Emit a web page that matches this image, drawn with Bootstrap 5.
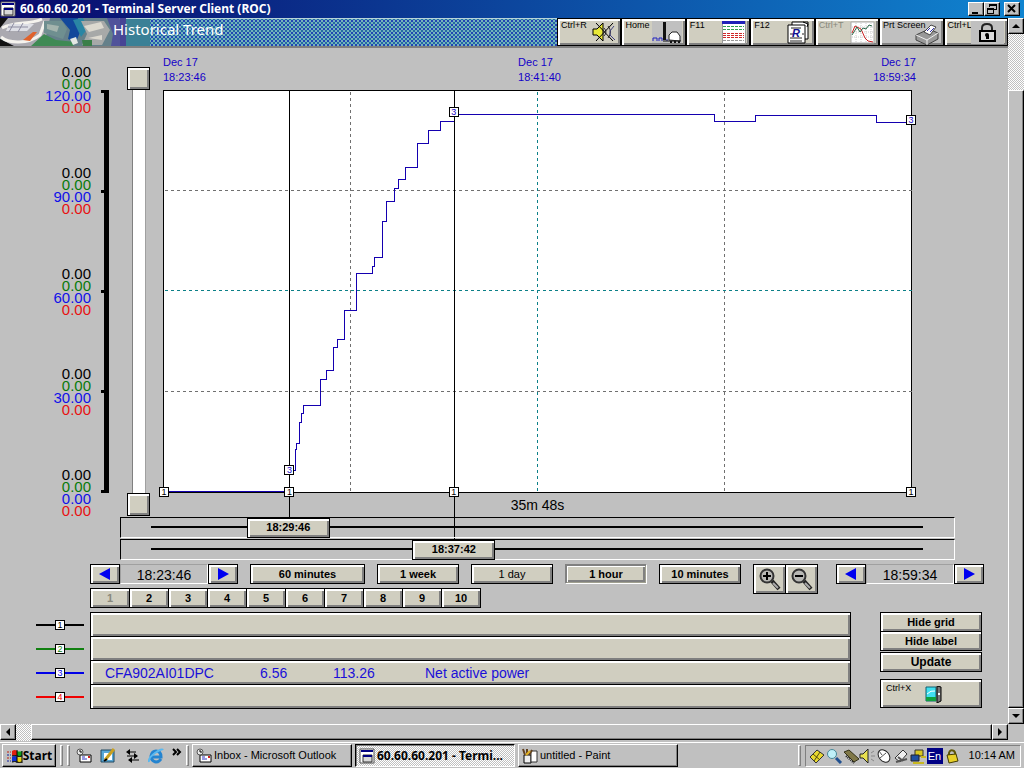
<!DOCTYPE html>
<html lang="en">
<head>
<meta charset="utf-8">
<meta name="viewport" content="width=device-width, initial-scale=1">
<title>60.60.60.201 - Terminal Server Client (ROC)</title>
<link href="https://cdn.jsdelivr.net/npm/bootstrap@5.3.0/dist/css/bootstrap.min.css" rel="stylesheet">
<style>
:root{--face:#c0c0c0;--key:#d0cec0;--ink:#1400c8;--dither:repeating-conic-gradient(#fff 0 25%,#c0c0c0 0 50%) 0 0/2px 2px}
body{font-family:"Liberation Sans",Arial,sans-serif;font-size:11px;line-height:1;color:#000;background:var(--face);min-width:980px}
button{color:#000;padding:0;border-radius:0;font:inherit;line-height:1}
svg{display:block;flex:none}
.btn{--bs-btn-padding-x:0;--bs-btn-padding-y:0;--bs-btn-border-radius:0;--bs-btn-color:#000;--bs-btn-font-size:11px;--bs-btn-line-height:1;--bs-btn-border-width:0;font-size:11px;line-height:1}
/* raised window-manager surfaces */
.raised,.raised.btn{background:var(--face);border:1px solid;border-color:#fff #000 #000 #fff;box-shadow:inset -1px -1px #808080}
.titlebar{height:18px;background:linear-gradient(90deg,#08086b,#1084d0);color:#fff;font:bold 12px/18px "Noto Sans","Liberation Sans",sans-serif}
.capbtn{width:16px;height:14px}
/* beige keys */
.key,.key.btn{background:var(--key);border:1px solid #000;border-radius:0;color:#000;box-shadow:inset 1px 1px #fff,inset 2px 2px #fff,inset -1px -1px #808080,inset -2px -2px #808080;font-weight:bold;display:flex;align-items:center;justify-content:center}
.key:hover,.key:active{background:var(--key);color:#000}
.key.held{border-color:#808080 #fff #fff #808080;box-shadow:inset 1px 1px #808080,inset -1px -1px #a0a090,inset 2px 2px #fff,inset -3px -3px #808080}
.key.plain{font-weight:normal;font-size:11px}
.key:disabled{color:#88887c;opacity:1}
.app-head{height:30px;border-bottom:2px solid #808080}
.photo{width:126px}
.photo svg{width:100%;height:100%}
.mesh{border-top:1px solid #b8d4d8;background:radial-gradient(circle,#2244b4 0 1px,transparent 1px) 0 0/4px 4px,radial-gradient(circle,#2468a4 0 1px,transparent 1px) 2px 2px/4px 4px,#74b4bc}
.teal{width:24px;background:#3a8096;border-top:1px solid #b8d4d8}
.app-title{font:15px/22px "Noto Sans","Liberation Sans",sans-serif;color:#fff;left:113px;top:0}
.shortcuts{width:451px}
.shortcut,.shortcut.btn{flex:1 1 0;height:28px;font-size:9px;font-weight:normal;align-items:flex-start;justify-content:flex-start;padding:2px 0 0 3px;position:relative;white-space:nowrap}
.shortcut svg{position:absolute;right:2px;top:1px}
.shortcut.flatkey{background:#c0c0c0}
/* chart */
.chart{display:grid;grid-template-columns:91px 10px 8px 18px 23px 13px minmax(300px,1fr) 96px;grid-template-rows:42px minmax(240px,1fr) 24px}
.dates{grid-area:1/7;color:var(--ink);line-height:15px;padding-top:7px;margin-right:-4px}
.scale-col{grid-area:2/1;margin:-24px 0;font-size:15px;line-height:12px;text-align:right}
.scale-col .s2{color:#087a08}.scale-col .s3{color:#1010e8}.scale-col .s4{color:#e81010}
.axis{grid-area:2/3;border-right:5px solid #000}
.axis i{height:3px;background:#000}
.vslide{grid-area:2/5;margin:-23px 0 -23px}
.vslide input{appearance:none;-webkit-appearance:none;writing-mode:vertical-lr;width:23px;min-height:0;flex:1 1 0;margin:0;background:linear-gradient(90deg,#808080 0 1px,#fff 1px 13px,#a0a0a0 13px) 50% 0/14px 100% no-repeat}
.vslide input::-webkit-slider-thumb{-webkit-appearance:none;width:23px;height:23px;background:var(--key);border:1px solid #000;box-shadow:inset 2px 2px #fff,inset -2px -2px #808080}
.plot{grid-area:2/7;background:#fff;border:1px solid #000;position:relative}
.plot svg{position:absolute;inset:0;width:100%;height:100%;overflow:visible}
.cursor-line{position:absolute;top:0;width:1px;background:#000}
.cursor-line.c1{height:calc(100% + 25px)}.cursor-line.c2{height:calc(100% + 47px)}
.tag{width:10px;height:10px;background:#fff;border:1px solid #000;font-size:9px;line-height:9px;text-align:center;color:#000}
.tag.blue{color:var(--ink)}
.plot .tag{position:absolute;margin:-5px 0 0 -5px}
.duration{grid-area:3/7;font-size:14px;line-height:24px}
.tracks{margin:0 53px 0 120px}
.lane{position:relative;height:21px;border:1px solid #000;border-color:#000 #fff #fff #000;margin-bottom:1px}
.lane input{-webkit-appearance:none;appearance:none;display:block;width:calc(100% - 1px);height:20px;margin:0;background:linear-gradient(#000,#000) 50% 8px/calc(100% - 60px) 2px no-repeat}
.lane input::-webkit-slider-thumb{-webkit-appearance:none;width:83px;height:20px;background:var(--key);border:1px solid #000;box-shadow:inset 2px 2px #fff,inset -2px -2px #808080}
.lane output{position:absolute;top:0;width:83px;font-weight:bold;line-height:19px;text-align:center;pointer-events:none}
/* controls */
.controls{padding:3px 24px 0 90px;gap:12px}
.k-arrow{width:30px;height:20px}.k-arrow svg{margin:auto}
.clock{width:88px;height:20px;border:1px solid;border-color:#a0a0a0 #fff #fff #a0a0a0;font-size:14px;line-height:20px;text-align:center}
.k-span{width:82px;height:20px}.k-wide{width:115px}
.zooms{margin-bottom:-20px}.zooms .key{width:33px;height:30px}.zooms .key+.key{margin-left:-1px}
.pages{padding:4px 0 0 90px}
.pages .key{width:40px;height:20px;margin-right:-1px}
.lower{padding:4px 26px 16px 36px;gap:29px}
.pen{width:48px;height:2px;margin-right:6px;background:currentColor}
.pen .tag{margin:-4px auto 0;color:inherit}
.pen-row{margin-bottom:-1px}
.pen-row .key{height:25px;color:#1a10d8;font-size:14px;font-weight:normal;justify-content:flex-start;text-align:left;padding-left:14px}
.f-tag{width:155px}.f-min{width:73px}.f-max{width:92px}
.side{width:102px}
.side .key{height:20px}
.side .key+.key{margin-top:-1px}
.side .key.big{font-size:12px;margin-top:1px}
.side .key.exit{height:29px;font-size:9px;font-weight:normal;align-items:flex-start;justify-content:flex-start;padding:4px 0 0 5px;position:relative;margin-top:7px}
.exit svg{position:absolute;left:44px;top:6px}
/* scroll bars */
.vbar{width:16px}.vbar .raised,.hbar .raised{width:16px;height:16px;display:flex;align-items:center;justify-content:center}
.gutter{background:var(--dither)}
.vbar .gutter{height:56px}
.vbar .grip{height:auto;width:16px}
.hbar{height:17px;padding-right:16px}
.hbar .gutter{width:15px}.hbar .grip{width:auto}
/* taskbar */
.taskbar{height:26px;border-top:1px solid #fff;padding:0 3px 0 2px;margin-top:1px}
.taskbar .btn{height:23px}
.start{width:54px;font:bold 12px/1 "Noto Sans","Liberation Sans",sans-serif}
.ridge{width:3px;height:21px;border:1px solid;border-color:#fff #808080 #808080 #fff}
.quick{width:108px;padding-left:2px}
.tasks{margin-left:3px;gap:3px}
.task{width:160px;padding-left:3px;gap:2px;justify-content:flex-start;white-space:nowrap}
.task.on,.task.on.btn{background:var(--dither);border-color:#000 #fff #fff #000;box-shadow:inset 1px 1px #808080;font:bold 12px/1 "Noto Sans","Liberation Sans",sans-serif}
.tray{height:22px;border:1px solid;border-color:#808080 #fff #fff #808080;padding:0 5px 0 3px}
.lang{background:#000084;color:#fff;width:16px;height:16px;font-size:11px;line-height:16px;text-align:center}
</style>
</head>
<body>
<svg width="0" height="0" class="position-absolute" aria-hidden="true">
 <defs>
  <symbol id="win" viewBox="0 0 16 16"><path d="M1 1h14v14H1z" fill="#fff" stroke="#555"/><path d="M2 2h12v2H2z" fill="#000080"/><path d="M4 7h9v7H4z" fill="#d8d8d8" stroke="#333"/><path d="M4 7h9v2H4z" fill="#000080"/></symbol>
  <symbol id="mail" viewBox="0 0 16 16"><path d="M4 7h11v7H4z" fill="#fff" stroke="#000"/><path d="M6 11h5M6 9h3" stroke="#3030c0"/><path d="M12 8h2v2h-2z" fill="#d02020"/><circle cx="4" cy="4" r="3" fill="#e8e8e8" stroke="#555"/><path d="M4 2v2h2" fill="none" stroke="#000"/></symbol>
  <symbol id="left" viewBox="0 0 12 12"><path d="M0 6 11 0v12z" fill="#0000f0"/></symbol>
  <symbol id="right" viewBox="0 0 12 12"><path d="M12 6 1 0v12z" fill="#0000f0"/></symbol>
 </defs>
</svg>
<div class="d-flex flex-column min-vh-100">
 <header class="titlebar d-flex align-items-center pe-1">
  <svg width="16" height="16" class="mx-1 ms-0"><use href="#win"/></svg>
  <span class="flex-grow-1">60.60.60.201 - Terminal Server Client (ROC)</span>
  <button class="btn raised capbtn" aria-label="Minimize"><svg width="14" height="12"><path d="M3 9h6v2H3z"/></svg></button>
  <button class="btn raised capbtn" aria-label="Restore"><svg width="14" height="12" fill="none" stroke="#000" shape-rendering="crispEdges"><path d="M4 4V1h7v5H9M4 2h7M2 5h6v5H2zM2 6h6"/></svg></button>
  <button class="btn raised capbtn ms-1" aria-label="Close"><svg width="14" height="12" stroke="#000" stroke-width="2"><path d="m3 2 7 7M10 2 3 9"/></svg></button>
 </header>
 <div class="d-flex flex-grow-1">
  <main class="d-flex flex-column flex-grow-1">
   <div class="app-head d-flex position-relative">
    <div class="photo"><svg viewBox="0 0 126 28" preserveAspectRatio="none"><path d="M0 0h126v28H0z" fill="#65808a"/><path d="M0 0h50l-4 18-12 10H12L0 20z" fill="#aaa9b0"/><path d="M0 0h8L0 10zM0 21l14 7H0z" fill="#111"/><path d="M2 10c14-7 28-3 40-9M1 19c8 7 27 7 39-2l5-14" fill="none" stroke="#f5f3ee" stroke-width="3"/><path d="M9 6h25l-7 7H6z" fill="#dedfe6"/><path d="M8 9h20M14 5l-5 9m14-9-5 9" stroke="#8c8ca0"/><path d="m23 22 10-8h4l-7 9z" fill="#e0622c"/><path d="M31 28 44 16l12 6 20 2-3 4z" fill="#3f8a54"/><path d="M44 3h18l5 8-4 10-19-6z" fill="#6f8f90"/><path d="m47 6 12 2-2 6-10-3z" fill="#a4b4ae"/><path d="M60 0h18l3 12-5 12-8-3 2-9z" fill="#12489b"/><path d="m73 2 10-2 5 10-7 9z" fill="#2a86a4"/><path d="m70 21 6-2 2 6-5 2z" fill="#e4e8e4"/><path d="M81 3h23l6 9-8 15H82l5-11z" fill="#a7a9a8"/><path d="m84 8 17-4 3 6-15 4zM88 20l14-3v5z" fill="#dcd9cf"/><path d="M82 22h10v6h-9z" fill="#3a7e48"/><path d="M107 0h12l6 12-3 16h-11l2-12z" fill="#50539a"/><path d="M120 0h6v28h-6z" fill="#474494"/></svg></div>
    <div class="teal"></div>
    <div class="mesh flex-grow-1"></div>
    <h1 class="app-title position-absolute m-0">Historical Trend</h1>
    <div class="shortcuts d-flex">
     <button class="btn key shortcut">Ctrl+R<svg width="28" height="24" fill="none" stroke="#000"><path d="M3 9h4l6-6v18l-6-6H3z" fill="#e8e838"/><path d="M14 8q4 4 0 8M18 6q5 6 0 12" stroke="#333"/><path d="m24 6-4 5v4l5 5" stroke="#404080"/><path d="m6 3 17 18M23 3 6 21" stroke-width="1"/></svg></button>
     <button class="btn key shortcut">Home<svg width="32" height="24"><path d="M1 1h30v22H1z" fill="#c0c0c0"/><path d="M12 2h3v18h-3z" fill="#111"/><path d="M18 20v-5l3-3h5l3 4v5z" fill="#fff" stroke="#222"/><path d="M2 21v-3h4v3m2 0v-3h3v3M16 21v-2" fill="none" stroke="#2020c0"/><path d="M12 21h18" stroke="#111"/><path d="M19 22h2m2 0h2m2 0h2" stroke="#111" stroke-width="2"/></svg></button>
     <button class="btn key shortcut">F11<svg width="26" height="24" shape-rendering="crispEdges"><path d="M1 1h23v22H1z" fill="#fff" stroke="#999"/><path d="M1 1h23v3H1z" fill="#2020b8"/><path d="M2 6h21M2 9h21" stroke="#30a050" stroke-dasharray="3 1"/><path d="M2 13h21M2 15h21M2 17h21" stroke="#d02828" stroke-dasharray="3 1"/><path d="M2 20h21" stroke="#999" stroke-dasharray="3 1"/></svg></button>
     <button class="btn key shortcut">F12<svg width="28" height="24" stroke="#000"><path d="M8 2h16v17H8z" fill="#fff"/><path d="M4 5h17v18H4z" fill="#fff"/><path d="M7 8h10M6 18h12M6 21h12M6 14h3m9 0h2" stroke="#222"/><text x="8" y="17" font-size="11" font-style="italic" font-weight="bold" fill="#101090" stroke="none">R</text><path d="m19 2 5 2-1 3" fill="none"/></svg></button>
     <button class="btn key shortcut" disabled>Ctrl+T<svg width="26" height="24" fill="none"><path d="M1 2h23v21H1z" fill="#fff" stroke="#aaa"/><path d="M6 3v19M11 3v19M16 3v19M21 3v19M2 7h21M2 12h21M2 17h21" stroke="#ccc" stroke-dasharray="1 1"/><path d="M2 13 5 6l4 2 2 1 4 9 3 3 5 1" stroke="#c22"/><path d="m2 15 5-8 3 5 3-4 3 1 3-4 3 1" stroke="#286848"/></svg></button>
     <button class="btn key shortcut flatkey">Prt Screen<svg width="28" height="25" stroke="#444"><path d="m3 15 13-6 9 4v6l-11 6-11-5z" fill="#999"/><path d="m3 15 11 5 11-7M14 20v5" fill="none" stroke="#eee"/><path d="m11 12 7-7 5 2-6 8z" fill="#fff"/><path d="m14 11 3-3m0 4 4-4" stroke="#3030b0"/></svg></button>
     <button class="btn key shortcut">Ctrl+L<svg width="34" height="24"><path d="M0 1h33v23H0z" fill="#c0c0c0"/><path d="M11 11V8q0-4 5-4t5 4v3" fill="none" stroke="#222" stroke-width="2"/><path d="M9 11h15v10H9z" fill="#ddd" stroke="#000" stroke-width="2"/><circle cx="16" cy="15" r="2"/><path d="M15 15h3v4h-3z"/></svg></button>
    </div>
   </div>

   <section class="chart flex-grow-1" aria-label="Historical trend">
    <div class="dates d-flex justify-content-between"><div>Dec 17<br>18:23:46</div><div>Dec 17<br>18:41:40</div><div class="text-end">Dec 17<br>18:59:34</div></div>
    <div class="scale-col d-flex flex-column justify-content-between">
     <div>0.00<div class="s2">0.00</div><div class="s3">120.00</div><div class="s4">0.00</div></div>
     <div>0.00<div class="s2">0.00</div><div class="s3">90.00</div><div class="s4">0.00</div></div>
     <div>0.00<div class="s2">0.00</div><div class="s3">60.00</div><div class="s4">0.00</div></div>
     <div>0.00<div class="s2">0.00</div><div class="s3">30.00</div><div class="s4">0.00</div></div>
     <div>0.00<div class="s2">0.00</div><div class="s3">0.00</div><div class="s4">0.00</div></div>
    </div>
    <div class="axis d-flex flex-column justify-content-between"><i></i><i></i><i></i><i></i><i></i></div>
    <div class="vslide d-flex flex-column">
     <input type="range" min="0" max="100" value="0" aria-label="Upper limit">
     <input type="range" min="0" max="100" value="100" aria-label="Lower limit">
    </div>
    <div class="plot">
     <svg viewBox="164 91 747 401" preserveAspectRatio="none" fill="none" shape-rendering="crispEdges"><g transform="translate(.5 .5)">
      <path d="M350 91V492M724 91V492M164 190H911M164 391H911" stroke="#707070" stroke-dasharray="3 3"/>
      <path d="M537 91V492M164 290H911" stroke="#0c8088" stroke-dasharray="3 3"/>
      <path d="M164 491H289" stroke="#1400b0"/>
      <path d="M289 470H295V449H296V443H299V422H301V413H303V405H320V379H326V370H333V347H337V339H344V310H356V273H372V266H374V257H382V221H386V201H394V188H398V179H405V167H417V143H428V130H440V121H454V114H714V121H755V115H876V122H911" stroke="#1400b0"/>
     </g></svg>
     <div class="cursor-line c1" style="left:16.8%"></div><div class="cursor-line c2" style="left:38.8%"></div>
     <div class="tag" style="left:0;top:100%">1</div><div class="tag" style="left:16.8%;top:100%">1</div><div class="tag" style="left:38.8%;top:100%">1</div><div class="tag" style="left:100%;top:100%">1</div>
     <div class="tag blue" style="left:16.8%;top:94.5%">3</div><div class="tag blue" style="left:38.8%;top:5.200%">3</div><div class="tag blue" style="left:100%;top:7.200%">3</div>
    </div>
    <div class="duration text-center">35m 48s</div>
   </section>

   <section class="tracks" aria-label="Cursors">
    <div class="lane"><input type="range" min="0" max="1000" value="168" id="cur1" aria-label="Cursor 1"><output for="cur1" style="left:calc((100% - 84px) * .168)">18:29:46</output></div>
    <div class="lane"><input type="range" min="0" max="1000" value="389" id="cur2" aria-label="Cursor 2"><output for="cur2" style="left:calc((100% - 84px) * .389)">18:37:42</output></div>
   </section>

   <div class="controls d-flex align-items-start">
    <div class="d-flex"><button class="btn key k-arrow" aria-label="Start earlier"><svg width="12" height="12"><use href="#left"/></svg></button><div class="clock">18:23:46</div><button class="btn key k-arrow" aria-label="Start later"><svg width="12" height="12"><use href="#right"/></svg></button></div>
    <button class="btn key k-span k-wide">60 minutes</button>
    <button class="btn key k-span">1 week</button>
    <button class="btn key k-span plain">1 day</button>
    <button class="btn key k-span held">1 hour</button>
    <button class="btn key k-span">10 minutes</button>
    <div class="zooms d-flex">
     <button class="btn key" aria-label="Zoom in"><svg width="26" height="24"><path d="m15 14 7 8" stroke="#222" stroke-width="4"/><path d="m16 16 5 5" stroke="#aaa" stroke-width="2"/><circle cx="10" cy="9" r="6.500" fill="#b8b8b4" stroke="#333" stroke-width="2"/><path d="M10 5v8M6 9h8" stroke="#000" stroke-width="2"/></svg></button>
     <button class="btn key" aria-label="Zoom out"><svg width="26" height="24"><path d="m15 14 7 8" stroke="#222" stroke-width="4"/><path d="m16 16 5 5" stroke="#aaa" stroke-width="2"/><circle cx="10" cy="9" r="6.500" fill="#b8b8b4" stroke="#333" stroke-width="2"/><path d="M6 9h8" stroke="#000" stroke-width="2"/></svg></button>
    </div>
    <div class="d-flex ms-auto"><button class="btn key k-arrow" aria-label="End earlier"><svg width="12" height="12"><use href="#left"/></svg></button><div class="clock">18:59:34</div><button class="btn key k-arrow" aria-label="End later"><svg width="12" height="12"><use href="#right"/></svg></button></div>
   </div>
   <div class="pages d-flex"><button class="btn key" disabled>1</button><button class="btn key">2</button><button class="btn key">3</button><button class="btn key">4</button><button class="btn key">5</button><button class="btn key">6</button><button class="btn key">7</button><button class="btn key">8</button><button class="btn key">9</button><button class="btn key">10</button></div>

   <div class="lower d-flex align-items-start">
    <div class="flex-grow-1">
     <div class="pen-row d-flex align-items-center"><div class="pen" style="color:#000"><div class="tag">1</div></div><button class="btn key flex-grow-1" aria-label="Pen 1"></button></div>
     <div class="pen-row d-flex align-items-center"><div class="pen" style="color:#108010"><div class="tag">2</div></div><button class="btn key flex-grow-1" aria-label="Pen 2"></button></div>
     <div class="pen-row d-flex align-items-center"><div class="pen" style="color:#0000e8"><div class="tag">3</div></div><button class="btn key flex-grow-1"><span class="f-tag">CFA902AI01DPC</span><span class="f-min">6.56</span><span class="f-max">113.26</span><span>Net active power</span></button></div>
     <div class="pen-row d-flex align-items-center"><div class="pen" style="color:#f00000"><div class="tag">4</div></div><button class="btn key flex-grow-1" aria-label="Pen 4"></button></div>
    </div>
    <div class="side d-flex flex-column">
     <button class="btn key">Hide grid</button><button class="btn key">Hide label</button><button class="btn key big">Update</button>
     <button class="btn key exit">Ctrl+X<svg width="18" height="17"><path d="M1 1h10v14H1z" fill="#40e0f0" stroke="#106070"/><path d="M1 11h10v4H1z" fill="#10a040"/><path d="M2 8q4-4 8-3" stroke="#fff" fill="none"/><path d="m12 0 4 1v14l-4 2z" fill="#777" stroke="#000"/><path d="M13 8h2" stroke="#fff" stroke-width="2"/></svg></button>
    </div>
   </div>
  </main>
  <div class="vbar d-flex flex-column">
   <button class="btn raised" aria-label="Scroll up"><svg width="8" height="4"><path d="M0 4 4 0l4 4z"/></svg></button>
   <div class="gutter"></div><div class="raised grip flex-grow-1"></div>
   <button class="btn raised" aria-label="Scroll down"><svg width="8" height="4"><path d="m0 0 4 4 4-4z"/></svg></button>
  </div>
 </div>
 <div class="hbar d-flex">
  <button class="btn raised" aria-label="Scroll left"><svg width="4" height="8"><path d="M4 0 0 4l4 4z"/></svg></button>
  <div class="gutter"></div><div class="raised grip flex-grow-1"></div>
  <button class="btn raised" aria-label="Scroll right"><svg width="4" height="8"><path d="m0 0 4 4-4 4z"/></svg></button>
 </div>
 <footer class="taskbar d-flex align-items-center">
  <button class="btn raised start d-flex align-items-center justify-content-center"><svg width="17" height="16"><path d="M6 3q3-2 5 0v5q-2-2-5 0z" fill="#e02010"/><path d="M11 3q2 1 5 0v5q-3 1-5 0z" fill="#10a020"/><path d="M6 9q3-2 5 0v5q-2-2-5 0z" fill="#1030d0"/><path d="M11 9q2 1 5 0v5q-3 1-5 0z" fill="#e8d010"/><path d="M11 2v13M6 8q3-1 5 0t5 0M16 3v12M6 14q3-1 5 0t5 0" fill="none" stroke="#000"/><path d="M1 4h4M1 10h4" stroke="#c02010" stroke-dasharray="2 1"/><path d="M1 7h4M1 13h4" stroke="#1020a0" stroke-dasharray="2 1"/></svg>Start</button>
  <div class="ridge ms-1"></div><div class="ridge ms-1"></div>
  <div class="quick d-flex align-items-center justify-content-between ms-1">
   <svg width="16" height="16"><use href="#mail"/></svg>
   <svg width="16" height="16"><path d="M1 2h13v12H1z" fill="#58a8d8" stroke="#204860"/><path d="M4 5h8v7H4z" fill="#fff"/><path d="m5 12 9-11" stroke="#c8a020" stroke-width="3"/><path d="m4 13 3-2" stroke="#000" stroke-width="2"/></svg>
   <svg width="16" height="16"><path d="M4 4h8M3 8h10M7 12h8" stroke="#000" stroke-width="1"/><path d="m6 1-4 3 4 3zM10 5l4 3-4 3zM8 9l-4 3 4 3z"/></svg>
   <svg width="16" height="16" fill="none"><path d="M13 11q-2 3-5 3-5-1-5-6 1-5 5-5 5 0 5 6H4" stroke="#2484d0" stroke-width="3"/><path d="M1 14Q0 10 7 5t8-3" stroke="#58b8f0" stroke-width="2"/></svg>
   <svg width="10" height="10" class="align-self-start" fill="none" stroke="#000" stroke-width="2"><path d="m1 1 3 3-3 3M5 1l3 3-3 3"/></svg>
  </div>
  <div class="ridge ms-1"></div>
  <div class="tasks d-flex">
   <button class="btn raised task d-flex align-items-center"><svg width="16" height="16"><use href="#mail"/></svg>Inbox - Microsoft Outlook</button>
   <button class="btn task raised on d-flex align-items-center"><svg width="16" height="16"><use href="#win"/></svg>60.60.60.201 - Termi...</button>
   <button class="btn raised task d-flex align-items-center"><svg width="16" height="16"><path d="M2 7h7v8H2z" fill="#eee" stroke="#000"/><path d="M9 3h6v11H9z" fill="#fff" stroke="#333"/><path d="m3 7-2-6m4 6V1m2 6 3-5" stroke="#604020" stroke-width="2"/><path d="m4 7 4-4" stroke="#e0b020" stroke-width="2"/></svg>untitled - Paint</button>
  </div>
  <div class="ridge ms-auto me-1"></div>
  <div class="tray d-flex align-items-center">
   <svg width="17" height="16"><path d="m1 9 7-7 7 5-8 8z" fill="#e8d830" stroke="#333"/><path d="m4 6 7 6M11 4l-6 9" stroke="#504810"/></svg>
   <svg width="17" height="16"><circle cx="6" cy="6" r="4.500" fill="#c0f0f8" stroke="#488898"/><path d="m10 10 5 5" stroke="#205090" stroke-width="3"/></svg>
   <svg width="16" height="16"><path d="m1 4 5-2 10 9-5 3z" fill="#807848" stroke="#333018"/><path d="m3 8 8 7" stroke="#222" stroke-dasharray="1 1" stroke-width="2"/></svg>
   <svg width="17" height="16"><path d="M1 6h3l5-5v14l-5-5H1z" fill="#e8e050" stroke="#222"/><path d="m12 5 3-2m-3 5h4m-4 3 3 2" stroke="#888"/></svg>
   <svg width="17" height="16"><ellipse cx="8" cy="8" rx="5" ry="7" transform="rotate(-40 8 8)" fill="#fff" stroke="#222"/><path d="m4 10 6-5M6 7 3 3" stroke="#555"/></svg>
   <svg width="17" height="16"><path d="m2 10 8-8 4 4-7 8z" fill="#eee" stroke="#333"/><path d="m3 14 11-3M5 9l5 4" stroke="#555" stroke-width="2"/></svg>
   <svg width="17" height="16"><path d="M5 2h8v6H5z" fill="#d8c820" stroke="#333"/><path d="M1 7h8v6H1z" fill="#2050a0" stroke="#222"/><path d="M11 9h5M3 15h11" stroke="#c8b820" stroke-width="2"/></svg>
   <span class="lang">En</span>
   <svg width="18" height="16"><path d="M6 8V5q1-4 5-2 2 2 1 5" fill="none" stroke="#605808" stroke-width="2"/><path d="m4 7 9-1 2 7-9 2z" fill="#e8d028" stroke="#443c00"/></svg>
   <span class="ps-2">10:14 AM</span>
  </div>
 </footer>
</div>
<script src="https://cdn.jsdelivr.net/npm/bootstrap@5.3.0/dist/js/bootstrap.bundle.min.js"></script>
</body>
</html>
